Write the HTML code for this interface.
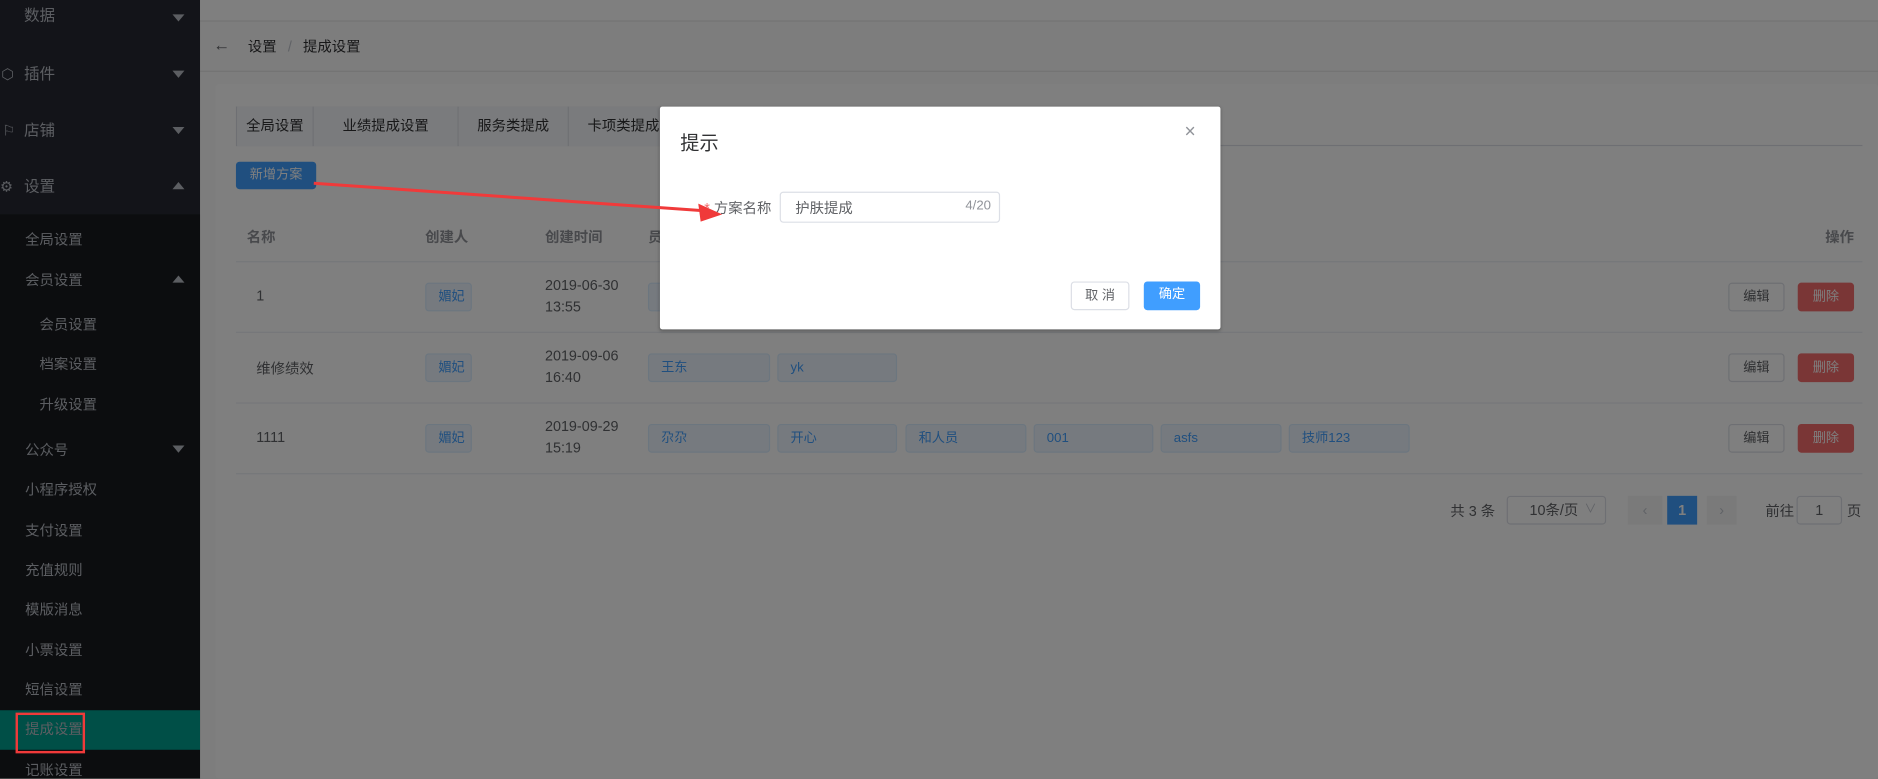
<!DOCTYPE html>
<html><head><meta charset="utf-8"><style>
*{box-sizing:border-box;margin:0;padding:0}
html,body{width:1878px;height:777px;overflow:hidden;background:#7d7d7d}
#w{position:absolute;left:0;top:0;width:1568px;height:650px;transform:scale(1.19770);transform-origin:0 0;font-family:"Liberation Sans","Noto Sans CJK SC",sans-serif;font-size:12px;color:#606266}
.a{position:absolute}
#side{left:0;top:0;width:167px;height:650px;background:#262832}
#sub{left:0;top:179px;width:167px;height:471px;background:#181a1f}
.si{position:absolute;color:#b8bcc4;font-size:12px;white-space:nowrap;line-height:14px}
.tri{position:absolute;width:0;height:0;border-left:5px solid transparent;border-right:5px solid transparent}
.dn{border-top:6px solid #b8bcc4}.up{border-bottom:6px solid #b8bcc4}
#main{left:167px;top:0;width:1401px;height:650px;background:#fafafa}
#card{left:180px;top:70px;width:1388px;height:580px;background:#fff;border-radius:3px}
.tab{position:absolute;top:89px;height:33px;line-height:32px;border-right:1px solid #dcdfe6;text-align:center;color:#303133;font-size:12px;background:#f5f7fa}
.th{position:absolute;top:189px;color:#909399;font-weight:bold;font-size:12px}
.hl{position:absolute;left:197px;width:1358px;height:1px;background:#ebeef5}
.tag{position:absolute;height:24px;line-height:22px;border:1px solid #d9ecff;background:#ecf5ff;color:#409eff;border-radius:3px;padding-left:10px;font-size:11px}
.btn{position:absolute;height:24px;line-height:22px;text-align:center;border-radius:3px;font-size:11px;white-space:nowrap}
.ed{border:1px solid #dcdfe6;background:#fff;color:#606266;width:47px}
.dl{background:#f56c6c;color:#fff;width:47px;border:1px solid #f56c6c}
#ov{left:0;top:0;width:1568px;height:650px;background:rgba(0,0,0,.5)}
#dlg{left:551px;top:89px;width:468px;height:186px;background:#fff;border-radius:2px;box-shadow:0 1px 3px rgba(0,0,0,.3)}
</style></head><body><div id="w">
<div class="a" id="main"></div>
<div class="a" style="left:167px;top:0;width:1401px;height:18px;background:#fff;border-bottom:1px solid #e6e6e6"></div>
<div class="a" style="left:178px;top:29px;font-size:14px;color:#606266">←</div>
<div class="a" style="left:207px;top:30px;font-size:12px;color:#303133">设置 <span style="color:#c0c4cc;margin:0 6px">/</span> 提成设置</div>
<div class="a" style="left:167px;top:59px;width:1401px;height:1px;background:#e6e6e6"></div>
<div class="a" id="card"></div>
<div class="a" style="left:197px;top:121px;width:1358px;height:1px;background:#dcdfe6"></div>
<div class="a" style="left:197px;top:89px;width:370px;height:33px;border:1px solid #dcdfe6;border-width:1px 0 0 1px"></div>
<div class="tab" style="left:198px;width:64px">全局设置</div>
<div class="tab" style="left:262px;width:121px">业绩提成设置</div>
<div class="tab" style="left:383px;width:92px">服务类提成</div>
<div class="tab" style="left:475px;width:92px">卡项类提成</div>
<div class="btn" style="left:197px;top:135px;width:67px;height:23px;background:#409eff;color:#fff">新增方案</div>
<div class="th" style="left:206px">名称</div><div class="th" style="left:355px">创建人</div><div class="th" style="left:455px">创建时间</div><div class="th" style="left:541px">员工</div><div class="th" style="left:1524px">操作</div>
<div class="hl" style="top:218px"></div><div class="hl" style="top:277px"></div><div class="hl" style="top:336px"></div><div class="hl" style="top:395px"></div>
<div class="a" style="left:214px;top:240px;color:#606266">1</div>
<div class="a" style="left:214px;top:299px">维修绩效</div>
<div class="a" style="left:214px;top:358px">1111</div>
<div class="tag" style="left:355px;top:236px;width:39px">媚妃</div>
<div class="tag" style="left:355px;top:295px;width:39px">媚妃</div>
<div class="tag" style="left:355px;top:354px;width:39px">媚妃</div>
<div class="a" style="left:455px;top:229px;line-height:18px">2019-06-30<br>13:55</div>
<div class="a" style="left:455px;top:288px;line-height:18px">2019-09-06<br>16:40</div>
<div class="a" style="left:455px;top:347px;line-height:18px">2019-09-29<br>15:19</div>
<div class="tag" style="left:541px;top:236px;width:102px"></div>
<div class="tag" style="left:541px;top:295px;width:102px">王东</div>
<div class="tag" style="left:649px;top:295px;width:100px">yk</div>
<div class="tag" style="left:541px;top:354px;width:102px">尕尕</div>
<div class="tag" style="left:649px;top:354px;width:100px">开心</div>
<div class="tag" style="left:756px;top:354px;width:101px">和人员</div>
<div class="tag" style="left:863px;top:354px;width:100px">001</div>
<div class="tag" style="left:969px;top:354px;width:101px">asfs</div>
<div class="tag" style="left:1076px;top:354px;width:101px">技师123</div>
<div class="btn ed" style="left:1443px;top:236px">编辑</div><div class="btn dl" style="left:1501px;top:236px">删除</div>
<div class="btn ed" style="left:1443px;top:295px">编辑</div><div class="btn dl" style="left:1501px;top:295px">删除</div>
<div class="btn ed" style="left:1443px;top:354px">编辑</div><div class="btn dl" style="left:1501px;top:354px">删除</div>
<div class="a" style="left:1211px;top:418px;color:#606266">共 3 条</div>
<div class="a" style="left:1258px;top:414px;width:83px;height:24px;border:1px solid #dcdfe6;border-radius:3px;line-height:22px;padding-left:18px;background:#fff;white-space:nowrap">10条/页<span style="color:#c0c4cc;position:absolute;right:7px;top:0;font-size:10px">∨</span></div>
<div class="a" style="left:1359px;top:414px;width:29px;height:24px;background:#f4f4f5;color:#c0c4cc;text-align:center;line-height:24px">‹</div>
<div class="a" style="left:1392px;top:414px;width:25px;height:24px;background:#409eff;color:#fff;text-align:center;line-height:24px;font-weight:bold">1</div>
<div class="a" style="left:1425px;top:414px;width:25px;height:24px;background:#f4f4f5;color:#c0c4cc;text-align:center;line-height:24px">›</div>
<div class="a" style="left:1474px;top:418px">前往</div>
<div class="a" style="left:1500px;top:414px;width:38px;height:24px;border:1px solid #dcdfe6;border-radius:3px;text-align:center;line-height:22px;background:#fff">1</div>
<div class="a" style="left:1542px;top:418px">页</div>

<div class="a" id="side"></div>
<div class="a" id="sub"></div>
<div class="si" style="left:20px;top:6px;font-size:13px">数据</div><div class="tri dn" style="left:144px;top:12px"></div>
<div class="si" style="left:1px;top:55px">⬡</div><div class="si" style="left:20px;top:55px;font-size:13px">插件</div><div class="tri dn" style="left:144px;top:59px"></div>
<div class="si" style="left:2px;top:102px">⚐</div><div class="si" style="left:20px;top:102px;font-size:13px">店铺</div><div class="tri dn" style="left:144px;top:106px"></div>
<div class="si" style="left:0px;top:149px">⚙</div><div class="si" style="left:20px;top:149px;font-size:13px">设置</div><div class="tri up" style="left:144px;top:152px"></div>
<div class="si" style="left:21px;top:193px">全局设置</div>
<div class="si" style="left:21px;top:227px">会员设置</div><div class="tri up" style="left:144px;top:230px"></div>
<div class="si" style="left:33px;top:264px">会员设置</div>
<div class="si" style="left:33px;top:297px">档案设置</div>
<div class="si" style="left:33px;top:331px">升级设置</div>
<div class="si" style="left:21px;top:369px">公众号</div><div class="tri dn" style="left:144px;top:372px"></div>
<div class="si" style="left:21px;top:402px">小程序授权</div>
<div class="si" style="left:21px;top:436px">支付设置</div>
<div class="si" style="left:21px;top:469px">充值规则</div>
<div class="si" style="left:21px;top:502px">模版消息</div>
<div class="si" style="left:21px;top:536px">小票设置</div>
<div class="si" style="left:21px;top:569px">短信设置</div>
<div class="a" style="left:0;top:593px;width:167px;height:33px;background:#009e8e"></div>
<div class="si" style="left:21px;top:602px">提成设置</div>
<div class="si" style="left:21px;top:636px">记账设置</div>

<div class="a" id="ov"></div>
<div class="a" style="left:13px;top:595px;width:58px;height:34px;border:2px solid #f03a3a"></div>

<div class="a" id="dlg"></div>
<div class="a" style="left:568px;top:106px;font-size:16px;color:#303133">提示</div>
<div class="a" style="left:989px;top:102px;font-size:16px;color:#909399">×</div>
<div class="a" style="left:588px;top:165px;font-size:12px;color:#606266"><span style="color:#f56c6c">*</span> 方案名称</div>
<div class="a" style="left:651px;top:160px;width:184px;height:26px;border:1px solid #dcdfe6;border-radius:3px;background:#fff"></div>
<div class="a" style="left:664px;top:165px;color:#606266">护肤提成</div>
<div class="a" style="left:806px;top:166px;color:#909399;font-size:11px">4/20</div>
<div class="btn" style="left:894px;top:235px;width:49px;border:1px solid #dcdfe6;background:#fff;color:#606266;line-height:23px">取 消</div>
<div class="btn" style="left:955px;top:235px;width:47px;background:#409eff;color:#fff;line-height:23px">确定</div>
<svg class="a" style="left:0;top:0" width="1568" height="650"><line x1="262" y1="153" x2="588" y2="176" stroke="#f03a3a" stroke-width="2.5"/><polygon points="603,179 583,170 585,185" fill="#f03a3a"/></svg>
</div></body></html>
